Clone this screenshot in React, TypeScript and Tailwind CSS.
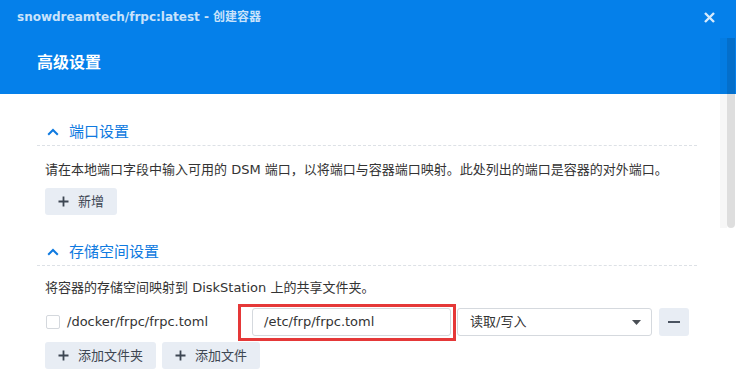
import React from 'react';

const Plus: React.FC = () => (
  <svg width="11" height="11" viewBox="0 0 11 11" className="shrink-0">
    <path d="M5.5 0.5v10M0.5 5.5h10" stroke="#3d4652" strokeWidth="1.8" />
  </svg>
);

const Chevron: React.FC = () => (
  <svg width="12" height="8" viewBox="0 0 12 8" className="shrink-0">
    <path d="M1.2 6.8L6 2l4.8 4.8" fill="none" stroke="#0f7ae0" strokeWidth="2" />
  </svg>
);

const GrayButton: React.FC<{ label: string; width: string }> = ({ label, width }) => (
  <button className={`h-[27px] ${width} flex items-center gap-[9px] pl-[13px] rounded-[3px] bg-[#e8edf4] text-[13px] text-[#3d4652]`}>
    <Plus />
    <span>{label}</span>
  </button>
);

const SectionTitle: React.FC<{ title: string }> = ({ title }) => (
  <div className="border-b border-dashed border-[#dde1e6] pb-[3px]">
    <div className="h-[20px] flex items-center gap-[10px] pl-[10px] text-[15px] text-[#0f7ae0]">
      <Chevron />
      <span>{title}</span>
    </div>
  </div>
);

export default function App() {
  return (
    <div className="relative w-[736px] h-[384px] overflow-hidden bg-white font-['DejaVu_Sans','Noto_Sans_CJK_SC',sans-serif]">
      {/* header */}
      <div className="h-[94px] bg-[#0580ea]">
        <div className="flex items-center justify-between pt-[9px] pl-[17px] pr-[21px] h-[25px]">
          <span className="text-[12px] leading-[16px] font-bold text-[#c9e3fb]">
            snowdreamtech/frpc:latest - 创建容器
          </span>
          <svg width="11" height="11" viewBox="0 0 11 11">
            <path d="M1 1l9 9M10 1l-9 9" stroke="#d6eafc" strokeWidth="2.4" />
          </svg>
        </div>
        <div className="mt-[27px] pl-[37px] text-[16px] leading-[22px] font-bold text-white">高级设置</div>
      </div>

      {/* body */}
      <div className="pl-[37px] pr-[39px] pt-[28px] text-[13px] text-[#333]">
        <SectionTitle title="端口设置" />
        <div className="mt-[14px] pl-[8px] leading-[20px]">
          请在本地端口字段中输入可用的 DSM 端口，以将端口与容器端口映射。此处列出的端口是容器的对外端口。
        </div>
        <div className="mt-[8px] pl-[8px]">
          <GrayButton label="新增" width="w-[72px]" />
        </div>

        <div className="mt-[27px]">
          <SectionTitle title="存储空间设置" />
        </div>
        <div className="mt-[12px] pl-[8px] leading-[20px]">
          将容器的存储空间映射到 DiskStation 上的共享文件夹。
        </div>

        <div className="mt-[10px] pl-[8px] flex items-center h-[28px]">
          <div className="w-[207px] flex items-center gap-[7px]">
            <span className="ml-[1px] w-[14px] h-[14px] rounded-[2px] border border-[#d4d8dd] bg-white" />
            <span className="text-[13px] text-[#333]">/docker/frpc/frpc.toml</span>
          </div>
          <div className="relative w-[199px] h-[28px]">
            <div className="h-full flex items-center pl-[11px] rounded-[3px] border border-[#d5d9de]">
              /etc/frp/frpc.toml
            </div>
            <div className="absolute left-[-14px] top-[-4px] w-[218px] h-[37px] border-[3px] border-[#e53838] pointer-events-none" />
          </div>
          <div className="ml-[6px] w-[195px] h-[28px] flex items-center justify-between pl-[12px] pr-[10px] rounded-[3px] border border-[#d5d9de]">
            <span>读取/写入</span>
            <svg width="9" height="5" viewBox="0 0 9 5">
              <path d="M0 0h9L4.5 5z" fill="#4a4f55" />
            </svg>
          </div>
          <div className="ml-[7px] w-[30px] h-[28px] rounded-[3px] bg-[#e8edf4] flex items-center justify-center">
            <span className="block w-[12px] h-[2px] bg-[#4a5360]" />
          </div>
        </div>

        <div className="mt-[6px] pl-[8px] flex gap-[6px]">
          <GrayButton label="添加文件夹" width="w-[111px]" />
          <GrayButton label="添加文件" width="w-[98px]" />
        </div>
      </div>

      {/* scrollbar overlay */}
      <div className="absolute right-[9px] top-[38px] w-[7px] h-[190px] bg-black/[0.03]" />
      <div className="absolute right-[1px] top-[38px] w-[8px] h-[190px] rounded-b-full bg-black/[0.13]" />
    </div>
  );
}
